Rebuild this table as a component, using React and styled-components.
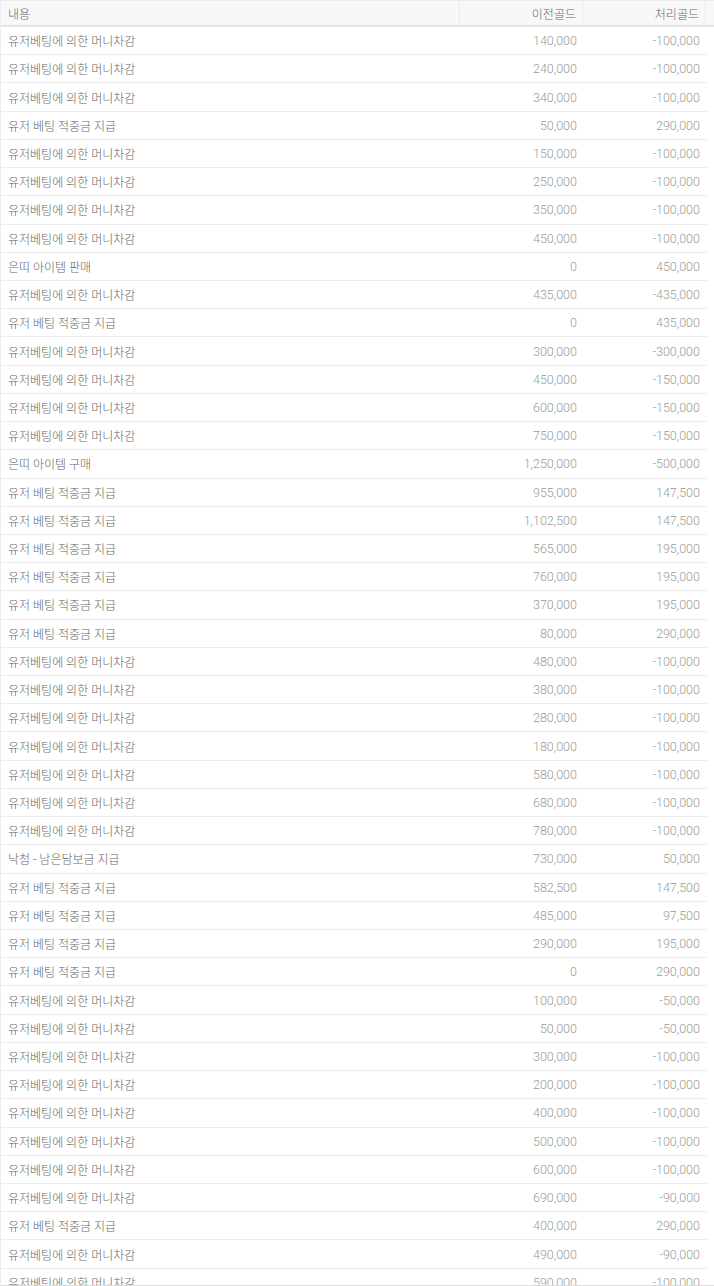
import React from 'react';
import styled, { createGlobalStyle } from 'styled-components';

const GlobalStyle = createGlobalStyle`
  html, body {
    margin: 0;
    padding: 0;
    background: #fff;
  }
  body {
    font-family: Roboto, "Noto Sans CJK KR", sans-serif;
  }
`;

const Grid = styled.div`
  width: 714px;
  height: 1286px;
  box-sizing: border-box;
  border-left: 1px solid #ececec;
  border-bottom: 1px solid #dcdcdc;
  overflow: hidden;
  display: flex;
  flex-direction: column;
`;

const HeaderRow = styled.div`
  display: grid;
  grid-template-columns: 459px 123px 123px 1fr;
  height: 27px;
  box-sizing: border-box;
  background: #f8f8f8;
  border-top: 1px solid #ececec;
  border-bottom: 2px solid #e6e6e6;
  flex-shrink: 0;
`;

const HeaderCell = styled.div`
  display: flex;
  align-items: center;
  justify-content: ${({ right }) => (right ? 'flex-end' : 'flex-start')};
  padding: 0 6px 0 7px;
  border-right: 1px solid #ebebeb;
  font-size: 12px;
  color: #666;
  font-weight: 300;

  &:last-child {
    border-right: none;
  }
`;

const Body = styled.div`
  width: 706px;
`;

const Row = styled.div`
  display: grid;
  grid-template-columns: 459px 123px 123px;
  height: 28.23px;
  box-sizing: border-box;
  border-bottom: 1px solid #ececec;
`;

const Cell = styled.div`
  display: flex;
  align-items: center;
  justify-content: ${({ right }) => (right ? 'flex-end' : 'flex-start')};
  padding: 0 6px 0 7px;
  font-size: ${({ right }) => (right ? '12.5px' : '12px')};
  font-weight: 300;
  color: ${({ right }) => (right ? '#9a9a9a' : '#666')};
  white-space: nowrap;
`;

const DEDUCT = '유저베팅에 의한 머니차감';
const HIT = '유저 베팅 적중금 지급';

const rows = [
  [DEDUCT, '140,000', '-100,000'],
  [DEDUCT, '240,000', '-100,000'],
  [DEDUCT, '340,000', '-100,000'],
  [HIT, '50,000', '290,000'],
  [DEDUCT, '150,000', '-100,000'],
  [DEDUCT, '250,000', '-100,000'],
  [DEDUCT, '350,000', '-100,000'],
  [DEDUCT, '450,000', '-100,000'],
  ['은띠 아이템 판매', '0', '450,000'],
  [DEDUCT, '435,000', '-435,000'],
  [HIT, '0', '435,000'],
  [DEDUCT, '300,000', '-300,000'],
  [DEDUCT, '450,000', '-150,000'],
  [DEDUCT, '600,000', '-150,000'],
  [DEDUCT, '750,000', '-150,000'],
  ['은띠 아이템 구매', '1,250,000', '-500,000'],
  [HIT, '955,000', '147,500'],
  [HIT, '1,102,500', '147,500'],
  [HIT, '565,000', '195,000'],
  [HIT, '760,000', '195,000'],
  [HIT, '370,000', '195,000'],
  [HIT, '80,000', '290,000'],
  [DEDUCT, '480,000', '-100,000'],
  [DEDUCT, '380,000', '-100,000'],
  [DEDUCT, '280,000', '-100,000'],
  [DEDUCT, '180,000', '-100,000'],
  [DEDUCT, '580,000', '-100,000'],
  [DEDUCT, '680,000', '-100,000'],
  [DEDUCT, '780,000', '-100,000'],
  ['낙첨 - 남은담보금 지급', '730,000', '50,000'],
  [HIT, '582,500', '147,500'],
  [HIT, '485,000', '97,500'],
  [HIT, '290,000', '195,000'],
  [HIT, '0', '290,000'],
  [DEDUCT, '100,000', '-50,000'],
  [DEDUCT, '50,000', '-50,000'],
  [DEDUCT, '300,000', '-100,000'],
  [DEDUCT, '200,000', '-100,000'],
  [DEDUCT, '400,000', '-100,000'],
  [DEDUCT, '500,000', '-100,000'],
  [DEDUCT, '600,000', '-100,000'],
  [DEDUCT, '690,000', '-90,000'],
  [HIT, '400,000', '290,000'],
  [DEDUCT, '490,000', '-90,000'],
  [DEDUCT, '590,000', '-100,000'],
];

export default function App() {
  return (
    <>
      <GlobalStyle />
      <Grid>
        <HeaderRow>
          <HeaderCell>내용</HeaderCell>
          <HeaderCell right>이전골드</HeaderCell>
          <HeaderCell right>처리골드</HeaderCell>
          <HeaderCell />
        </HeaderRow>
        <Body>
          {rows.map(([label, prev, amount], i) => (
            <Row key={i}>
              <Cell>{label}</Cell>
              <Cell right>{prev}</Cell>
              <Cell right>{amount}</Cell>
            </Row>
          ))}
        </Body>
      </Grid>
    </>
  );
}
